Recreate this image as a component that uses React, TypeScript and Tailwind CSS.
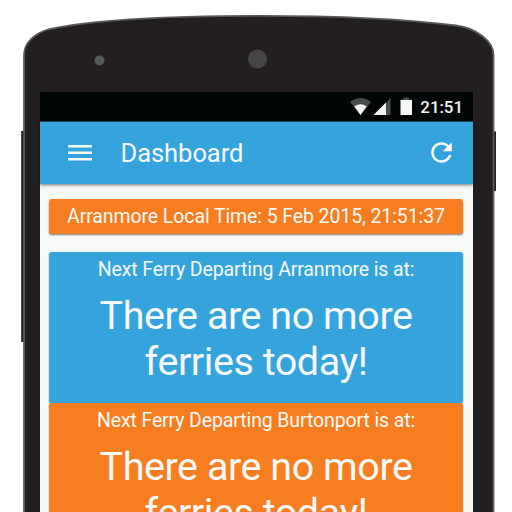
import React from 'react';

function PhoneBody() {
  return (
    <svg className="absolute inset-0" width="512" height="512" viewBox="0 0 512 512" aria-hidden="true">
      <rect x="21" y="131" width="4" height="211" fill="#231f20" />
      <rect x="21" y="131" width="1" height="211" fill="#4d4d4f" />
      <rect x="492" y="131.5" width="4" height="59.5" fill="#231f20" />
      <path
        d="M24 530V55C24 42 36 33 48 29.500C90 20 170 15.800 258 15.800C340 15.800 410 19.500 456 25.500C476 28 493.500 41 493.500 55V530Z"
        fill="#231f20"
        stroke="#58595b"
        strokeWidth="1.800"
      />
      <circle cx="99.500" cy="60.500" r="5" fill="#58595b" />
      <circle cx="257.500" cy="59" r="9.500" fill="#454547" />
    </svg>
  );
}

function StatusBar() {
  return (
    <div className="flex h-[30px] shrink-0 items-center justify-end border-b border-[#2b4a5b] bg-[#020606] pr-[10px]">
      <svg width="64" height="20" viewBox="0 0 64 20" className="mr-[6.500px]" aria-hidden="true">
        <path d="M0 5Q10.500 -3 21 5L10.500 18Z" fill="#4b4d4d" />
        <path d="M4.300 9.500Q10.500 4.800 16.700 9.500L10.500 18Z" fill="#f1f2f2" />
        <path d="M40.500 1V18H23.500Z" fill="#4b4d4d" />
        <path d="M36 5.500V18H23.500Z" fill="#f1f2f2" />
        <path d="M53.500 0.500h5.500v2h3v2H50.500v-2h3Z" fill="#4b4d4d" />
        <rect x="50.500" y="3" width="11.500" height="15" fill="#f5f5f5" />
      </svg>
      <span className="text-[17px] font-medium leading-[30px] tracking-[-0.100px] text-[#f1f2f2]">21:51</span>
    </div>
  );
}

function AppBar() {
  return (
    <header className="relative z-10 flex h-[62px] shrink-0 items-center bg-[#35a4dd] pl-7 pr-[16px] shadow-[0_1px_3px_rgba(0,0,0,0.55)]">
      <svg width="24" height="16" viewBox="0 0 24 16" aria-hidden="true">
        <path d="M0 0h24v2.600H0ZM0 6.500h24v2.600H0ZM0 13h24v2.600H0Z" fill="#f7f9f9" />
      </svg>
      <h1 className="ml-[28.500px] text-[25.500px] leading-8 tracking-[-0.050px]">Dashboard</h1>
      <svg className="mb-[2px] ml-auto" width="31" height="31" viewBox="0 0 24 24" aria-hidden="true">
        <path
          d="M17.650 6.350C16.200 4.900 14.210 4 12 4c-4.420 0-7.990 3.580-7.990 8s3.570 8 7.990 8c3.730 0 6.840-2.550 7.730-6h-2.080c-.82 2.330-3.040 4-5.650 4-3.310 0-6-2.690-6-6s2.690-6 6-6c1.660 0 3.140.69 4.220 1.780L13 11h7V4l-2.350 2.350z"
          fill="#f7f9f9"
        />
      </svg>
    </header>
  );
}

function FerryCard({ port, color }: { port: string; color: string }) {
  return (
    <section className={`h-[151px] shrink-0 rounded-[3px] text-center shadow-[0_1px_2px_rgba(0,0,0,0.35)] ${color}`}>
      <h2 className="pt-[6px] text-[19.500px] leading-6 tracking-[-0.120px]">Next Ferry Departing {port} is at:</h2>
      <p className="pt-[11px] text-[39.500px] leading-[46px] tracking-[-0.450px]">
        There are no more
        <br />
        ferries today!
      </p>
    </section>
  );
}

export default function App() {
  return (
    <div className="relative h-[512px] w-[512px] overflow-hidden bg-white font-['Roboto',sans-serif] text-[#f7f9f9]">
      <PhoneBody />
      <div className="relative flex h-full flex-col pl-10 pr-[39px] pt-[92px]">
        <StatusBar />
        <AppBar />
        <main className="flex min-h-0 flex-1 flex-col overflow-hidden bg-[#f7f9f9] px-[9px] pr-[10px] pt-[15px]">
          <div className="mb-[18px] h-[35px] shrink-0 whitespace-nowrap rounded-[3px] bg-[#f67e20] text-center text-[19.500px] leading-[35px] tracking-[-0.100px] shadow-[0_1px_2px_rgba(0,0,0,0.5)]">
            Arranmore Local Time: 5 Feb 2015, 21:51:37
          </div>
          <FerryCard port="Arranmore" color="bg-[#35a4dd]" />
          <FerryCard port="Burtonport" color="bg-[#f67e20]" />
        </main>
      </div>
    </div>
  );
}
